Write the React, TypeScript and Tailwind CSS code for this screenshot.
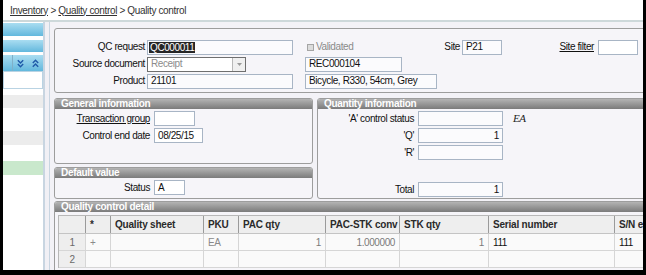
import React from 'react'
import clsx from 'clsx'

// Small text input box
const Field = ({
  w,
  children,
  right,
  className,
}: {
  w: string
  children?: React.ReactNode
  right?: boolean
  className?: string
}) => (
  <div
    className={clsx(
      'h-[15px] shrink-0 border border-[#a8b5c5] bg-[#fbfbfd] px-[3px] flex items-center text-[10px] leading-none text-[#111] whitespace-nowrap overflow-hidden',
      right && 'justify-end',
      w,
      className
    )}
  >
    {children}
  </div>
)

const Bar = ({ title }: { title: string }) => (
  <div className="h-[10px] rounded-t-[2px] bg-linear-to-b from-[#b4b4b4] to-[#7b7b7b] pl-[6px] text-[10px] leading-[10px] font-bold text-white tracking-[-0.3px] whitespace-nowrap">
    {title}
  </div>
)

const Label = ({ w, children, link }: { w: string; children: React.ReactNode; link?: boolean }) => (
  <div className={clsx('shrink-0 text-right text-[10px] leading-none text-[#111] whitespace-nowrap', w, link && 'underline')}>
    {children}
  </div>
)

const cols = [
  { w: 'w-[27px]', title: '' },
  { w: 'w-[25px]', title: '*' },
  { w: 'w-[93px]', title: 'Quality sheet' },
  { w: 'w-[35px]', title: 'PKU' },
  { w: 'w-[87px]', title: 'PAC qty' },
  { w: 'w-[74px]', title: 'PAC-STK conv' },
  { w: 'w-[89px]', title: 'STK qty' },
  { w: 'w-[126px]', title: 'Serial number' },
  { w: 'w-[80px]', title: 'S/N end' },
]

const rows = [
  ['1', '+', '', 'EA', '1', '1.000000', '1', '111', '111'],
  ['2', '', '', '', '', '', '', '', ''],
]

const Chevrons = ({ up }: { up?: boolean }) => (
  <svg width="9" height="9" viewBox="0 0 10 10">
    <g fill="none" stroke="#1f5aa8" strokeWidth="1.6" transform={up ? 'rotate(180 5 5)' : undefined}>
      <path d="M2 1.5 L5 4.5 L8 1.5" />
      <path d="M2 5.5 L5 8.5 L8 5.5" />
    </g>
  </svg>
)

export default function App() {
  return (
    <div className="w-[646px] h-[275px] bg-black px-[3px] pb-[5px] overflow-hidden font-['Liberation_Sans',Arial,sans-serif] tracking-[-0.4px]">
      <div className="h-full flex flex-col bg-[#f3f2f7] overflow-hidden">
        {/* Breadcrumb */}
        <div className="h-[20px] shrink-0 bg-white pl-[7px] flex items-center text-[10px] text-[#333] tracking-[-0.35px] whitespace-nowrap">
          <span className="underline">Inventory</span>
          <span>&nbsp;&gt;&nbsp;</span>
          <span className="underline">Quality control</span>
          <span>&nbsp;&gt; Quality control</span>
        </div>
        <div className="h-[2px] shrink-0 bg-[#cdd8da]" />

        <div className="flex flex-1 min-h-0">
          {/* Left navigation panel */}
          <div className="w-[40px] shrink-0 bg-white flex flex-col">
            <div className="mt-px h-[13px] bg-linear-to-b from-[#a9ddf1] to-[#62b8dd]" />
            <div className="mt-[4px] h-[12px] bg-linear-to-b from-[#a9ddf1] to-[#62b8dd]" />
            <div className="mt-[3px] h-[16px] bg-linear-to-b from-[#a9ddf1] to-[#62b8dd] flex items-center">
              <div className="w-[10px] h-full border-r border-[#7fb0c8]" />
              <div className="ml-[3px]">
                <Chevrons />
              </div>
              <div className="ml-[6px]">
                <Chevrons up />
              </div>
            </div>
            <div className="h-[18px] border border-[#b9d3e3] bg-white" />
            <div className="h-[6px]" />
            <div className="h-[13px] bg-[#ececec]" />
            <div className="h-[23px]" />
            <div className="h-[14px] bg-[#ececec]" />
            <div className="h-[16px]" />
            <div className="h-[14px] bg-[#c9e8cc]" />
          </div>
          <div className="w-[7px] shrink-0 border-l-2 border-r border-[#c8d5e1] bg-[#f1f0f5]" />

          {/* Main form */}
          <div className="flex-1 min-w-0 overflow-hidden pl-[4px] pt-[6px]">
            <div className="w-[620px] flex flex-col">
              {/* Header box */}
              <div className="h-[65px] rounded-[3px] border border-[#9d9d9d] bg-[#f6f5f9] pt-[10px] flex flex-col gap-px">
                <div className="h-[16px] flex items-center">
                  <Label w="w-[90px]">QC request</Label>
                  <Field w="w-[146px]" className="ml-[2px] pl-[1px]">
                    <span className="bg-[#262626] text-white px-px leading-[11px]">QC000011</span>
                  </Field>
                  <div className="w-[149px] shrink-0 pl-[14px] flex items-center">
                    <div className="w-[7px] h-[7px] border border-[#a5a5a5] bg-[#dcdcdc]" />
                    <span className="ml-[2px] text-[10px] leading-none text-[#8a8a8a]">Validated</span>
                  </div>
                  <Label w="w-[18px]">Site</Label>
                  <Field w="w-[40px]" className="ml-[2px]">P21</Field>
                  <Label w="w-[92px]" link>
                    Site filter
                  </Label>
                  <Field w="w-[40px]" className="ml-[4px] bg-white" />
                </div>
                <div className="h-[16px] flex items-center">
                  <Label w="w-[90px]">Source document</Label>
                  <div className="ml-[2px] w-[99px] h-[15px] shrink-0 border border-[#6f6f6f] bg-white flex">
                    <div className="flex-1 px-[3px] flex items-center text-[10px] leading-none text-[#8c8c8c]">Receipt</div>
                    <div className="w-[13px] border-l border-[#b8b8b8] bg-[#f0f0f0] flex items-center justify-center">
                      <svg width="5" height="3" viewBox="0 0 5 3">
                        <path d="M0 0 H5 L2.5 3 Z" fill="#9a9a9a" />
                      </svg>
                    </div>
                  </div>
                  <Field w="w-[97px]" className="ml-[59px]">REC000104</Field>
                </div>
                <div className="h-[16px] flex items-center">
                  <Label w="w-[90px]">Product</Label>
                  <Field w="w-[146px]" className="ml-[2px]">21101</Field>
                  <Field w="w-[132px]" className="ml-[12px]">Bicycle, R330, 54cm, Grey</Field>
                </div>
              </div>

              {/* Information groups */}
              <div className="mt-[5px] flex gap-[4px]">
                <div className="w-[259px] shrink-0 flex flex-col gap-[3px]">
                  <div className="h-[66px] rounded-[3px] border border-[#9d9d9d] bg-[#f6f5f9]">
                    <Bar title="General information" />
                    <div className="pt-[2px] flex flex-col gap-[2px]">
                      <div className="flex items-center">
                        <Label w="w-[95px]" link>
                          Transaction group
                        </Label>
                        <Field w="w-[41px]" className="ml-[4px] bg-white" />
                      </div>
                      <div className="flex items-center">
                        <Label w="w-[95px]">Control end date</Label>
                        <Field w="w-[49px]" className="ml-[4px] bg-white">08/25/15</Field>
                      </div>
                    </div>
                  </div>
                  <div className="h-[32px] rounded-[3px] border border-[#9d9d9d] bg-[#f6f5f9]">
                    <Bar title="Default value" />
                    <div className="pt-[2px] flex items-center">
                      <Label w="w-[95px]">Status</Label>
                      <Field w="w-[31px]" className="ml-[4px] bg-white">A</Field>
                    </div>
                  </div>
                </div>

                <div className="w-[340px] h-[101px] shrink-0 rounded-[3px] border border-[#9d9d9d] bg-[#f6f5f9]">
                  <Bar title="Quantity information" />
                  <div className="pt-[2px] flex flex-col gap-[2px]">
                    <div className="flex items-center">
                      <Label w="w-[96px]">'A' control status</Label>
                      <Field w="w-[85px]" className="ml-[4px]" />
                      <span className="ml-[10px] text-[11px] leading-none italic font-['Liberation_Serif',serif] text-[#222]">EA</span>
                    </div>
                    <div className="flex items-center">
                      <Label w="w-[96px]">'Q'</Label>
                      <Field w="w-[85px]" className="ml-[4px]" right>
                        1
                      </Field>
                    </div>
                    <div className="flex items-center">
                      <Label w="w-[96px]">'R'</Label>
                      <Field w="w-[85px]" className="ml-[4px]" />
                    </div>
                    <div className="mt-[20px] flex items-center">
                      <Label w="w-[96px]">Total</Label>
                      <Field w="w-[85px]" className="ml-[4px]" right>
                        1
                      </Field>
                    </div>
                  </div>
                </div>
              </div>

              {/* Quality control detail */}
              <div className="mt-[2px] h-[80px] rounded-[3px] border border-[#9d9d9d] bg-[#f6f5f9]">
                <Bar title="Quality control detail" />
                <div className="mt-[3px] ml-[3px] border-t border-l border-[#b8b8b8] bg-[#fafafa]">
                  <div className="h-[18px] flex bg-[#eeeeee] border-b border-[#c4c4c4]">
                    {cols.map((c, i) => (
                      <div
                        key={i}
                        className={clsx(
                          'shrink-0 h-full border-r border-[#9a9a9a] px-[4px] flex items-center text-[10px] font-bold text-[#2a2a2a] tracking-[-0.2px] whitespace-nowrap overflow-hidden',
                          c.w
                        )}
                      >
                        {c.title}
                      </div>
                    ))}
                  </div>
                  {rows.map((r, ri) => (
                    <div key={ri} className="h-[17px] flex border-b border-[#d6d6d6]">
                      {r.map((v, ci) => (
                        <div
                          key={ci}
                          className={clsx(
                            'shrink-0 h-full border-r border-[#d6d6d6] px-[4px] flex items-center text-[10px] whitespace-nowrap overflow-hidden',
                            cols[ci].w,
                            ci === 0 && 'justify-center bg-[#eeeeee] border-[#bdbdbd] text-[#6a6a6a]',
                            (ci === 4 || ci === 5 || ci === 6) && 'justify-end text-[#7a7a7a]',
                            (ci === 1 || ci === 3) && 'text-[#8a8a8a]',
                            ci >= 7 && 'text-[#111]'
                          )}
                        >
                          {v}
                        </div>
                      ))}
                    </div>
                  ))}
                </div>
              </div>
            </div>
          </div>
        </div>
      </div>
    </div>
  )
}
